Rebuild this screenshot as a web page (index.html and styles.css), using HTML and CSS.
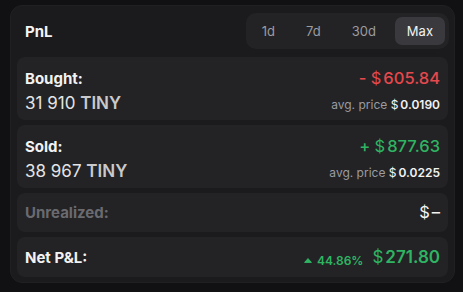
FILE: index.html
```html
<!DOCTYPE html>
<html>

<head>
    <title>PnL</title>
    <meta charset="utf-8">
    <meta name="viewport" content="width=device-width, initial-scale=1">
    <link rel="stylesheet" href="styles.css">
</head>

<body>
    <div class="pnl-card">
        <div class="pnl-header">
            <h2 class="pnl-title">PnL</h2>
            <ul class="range-tabs">
                <li class="range-tab">1d</li>
                <li class="range-tab">7d</li>
                <li class="range-tab">30d</li>
                <li class="range-tab active">Max</li>
            </ul>
        </div>
        <div class="pnl-rows">
            <div class="pnl-row">
                <div class="row-line">
                    <span class="row-label">Bought:</span>
                    <span class="row-value negative">- <span class="cur">$</span>605.84</span>
                </div>
                <div class="row-line">
                    <span class="amount">31 910 <b>TINY</b></span>
                    <span class="avg">avg. price <span class="avg-num"><span class="cur">$</span>0.0190</span></span>
                </div>
            </div>
            <div class="pnl-row">
                <div class="row-line">
                    <span class="row-label">Sold:</span>
                    <span class="row-value positive">+ <span class="cur">$</span>877.63</span>
                </div>
                <div class="row-line">
                    <span class="amount">38 967 <b>TINY</b></span>
                    <span class="avg">avg. price <span class="avg-num"><span class="cur">$</span>0.0225</span></span>
                </div>
            </div>
            <div class="pnl-row single">
                <div class="row-line">
                    <span class="row-label muted">Unrealized:</span>
                    <span class="row-value plain"><span class="cur">$</span>–</span>
                </div>
            </div>
            <div class="pnl-row single net">
                <div class="row-line">
                    <span class="row-label">Net P&amp;L:</span>
                    <span class="net-value">
                        <span class="change">
                            <svg class="caret" width="8" height="5" viewBox="0 0 8 5"><path d="M4 0.6 L7.4 4.4 L0.6 4.4 Z" fill="#2fb463" stroke="#2fb463" stroke-width="1" stroke-linejoin="round"/></svg>
                            44.86%
                        </span>
                        <span class="row-value positive strong"><span class="cur">$</span>271.80</span>
                    </span>
                </div>
            </div>
        </div>
    </div>
</body>

</html>
```

FILE: styles.css
```css
body,
html {
    font-family: Inter, 'Noto Sans', sans-serif;
    margin: 0;
    padding: 0;
    background-color: #111113;
    color: #f2f2f2;
}

.pnl-card {
    margin: 5px 8px 0 10px;
    padding: 7px 6px 5px 6px;
    background-color: #1b1b1d;
    border: 1px solid #202022;
    border-radius: 12px;
}

.pnl-header {
    display: flex;
    justify-content: space-between;
    align-items: center;
    height: 36px;
    margin-bottom: 8px;
    padding-left: 8px;
}

.pnl-title {
    margin: 0;
    font-size: 15px;
    font-weight: 700;
    color: #f4f4f4;
}

.range-tabs {
    display: flex;
    gap: 7px;
    margin: 0 -1px 0 0;
    padding: 4px;
    list-style-type: none;
    background-color: #232325;
    border-radius: 10px;
}

.range-tab {
    height: 28px;
    line-height: 28px;
    padding: 0 12px;
    font-size: 13px;
    color: #9b9ba0;
    border-radius: 7px;
}

.range-tab.active {
    background-color: #3a3a3e;
    color: #f2f2f2;
}

.pnl-rows {
    display: flex;
    flex-direction: column;
    gap: 5px;
}

.pnl-row {
    display: flex;
    flex-direction: column;
    gap: 3px;
    padding: 10px 8px 6px;
    background-color: #232325;
    border-radius: 8px;
}

.pnl-row.single {
    padding: 8px 8px 9px;
}

.pnl-row.net {
    padding: 9px 8px 9px;
}

.row-line {
    display: flex;
    justify-content: space-between;
    align-items: baseline;
    height: 22px;
    line-height: 22px;
}

.row-label {
    font-size: 15px;
    font-weight: 700;
    color: #f2f2f2;
}

.row-label.muted {
    color: #6a6a6f;
}

.row-value {
    font-size: 16.5px;
    font-weight: 500;
}

.row-value .cur {
    font-weight: 400;
    margin-right: 2px;
}

.negative {
    color: #e5484d;
}

.positive {
    color: #2fb463;
}

.plain {
    color: #f2f2f2;
}

.amount {
    font-size: 17px;
    color: #e4e4e6;
}

.amount b {
    font-weight: 600;
    color: #c9c9cc;
}

.avg {
    font-size: 12px;
    color: #9b9ba0;
}

.avg-num {
    font-weight: 600;
    color: #f2f2f2;
}

.avg-num .cur {
    font-weight: 400;
    margin-right: 2px;
}

.net-value {
    display: flex;
    align-items: baseline;
    gap: 9px;
}

.change {
    display: flex;
    align-items: center;
    gap: 5px;
    font-size: 12px;
    font-weight: 600;
    color: #2fb463;
}

.caret {
    display: block;
}

.row-value.strong {
    font-size: 17px;
    font-weight: 600;
}
```
